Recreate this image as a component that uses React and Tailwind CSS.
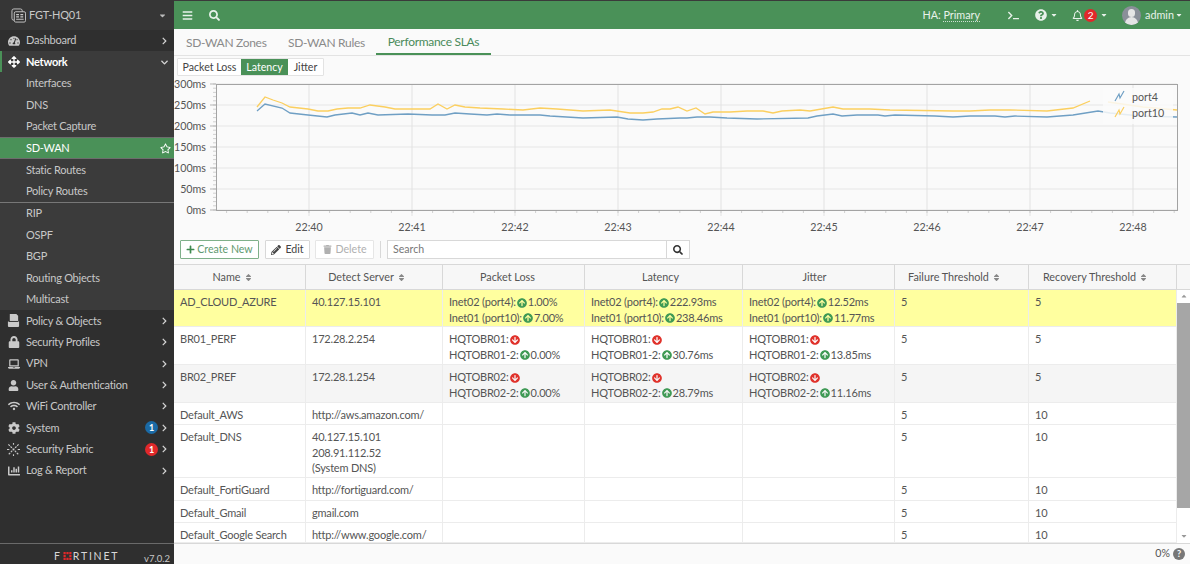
import React from "react";
import {
  FaTachometerAlt, FaArrowsAlt, FaRegStar, FaLock, FaLaptop, FaUser, FaWifi, FaCog, FaChartBar,
  FaBars, FaSearch, FaTerminal, FaQuestionCircle, FaRegBell, FaCaretDown, FaChevronRight, FaChevronDown,
  FaPlus, FaPencilAlt, FaTrash, FaSort, FaArrowCircleUp, FaArrowCircleDown, FaCaretUp,
} from "react-icons/fa";

const yellowA = [[257,107],[265,97],[273,100],[282,103],[290,107],[308,109],[318,111],[328,111],[337,109],[348,108],[360,108],[370,105],[385,107],[395,109],[408,109],[418,109],[430,109],[438,104],[447,109],[455,105],[465,107],[480,108],[503,109],[523,110],[540,108],[557,109],[583,111],[610,110],[630,113],[643,113],[653,112],[662,109],[670,109],[678,107],[687,111],[696,108],[705,114],[713,112],[730,112],[747,111],[763,111],[773,113],[782,111],[800,110],[810,111],[833,107],[843,109],[870,109],[890,110],[953,111],[970,111],[990,110],[1010,110],[1047,111],[1073,108],[1090,101]];
const yellowB = [[1108,102],[1143,107],[1177,110]];
const blue = [[257,111],[265,104],[282,108],[290,113],[308,115],[327,117],[335,115],[352,113],[360,115],[368,113],[378,115],[408,114],[432,115],[445,115],[455,113],[470,114],[487,115],[497,114],[510,115],[540,115],[550,116],[583,118],[617,117],[628,119],[643,120],[657,119],[680,118],[687,118],[697,117],[710,117],[727,118],[757,119],[808,118],[817,116],[833,114],[842,116],[857,115],[878,115],[885,116],[895,115],[935,116],[953,117],[970,116],[995,116],[1005,117],[1015,116],[1047,117],[1073,115],[1098,111],[1110,113],[1140,116],[1177,117]];
const pts = (a) => a.map((p) => p.join(",")).join(" ");

function Chart() {
  const ys = [[84,"300ms"],[105,"250ms"],[126,"200ms"],[147,"150ms"],[168,"100ms"],[189,"50ms"],[210,"0ms"]];
  const xs = [[309,"22:40"],[412,"22:41"],[515,"22:42"],[618,"22:43"],[721,"22:44"],[824,"22:45"],[927,"22:46"],[1030,"22:47"],[1133,"22:48"]];
  const minorX = [];
  for (let x = 226.6; x < 1177; x += 20.6) minorX.push(x);
  const minorY = [];
  for (let y = 84; y <= 210; y += 4.2) minorY.push(y);
  return (
    <svg viewBox="174 76 1016 162" className="block h-[162px] w-[1016px] shrink-0">
      {ys.map(([y]) => <line key={y} x1="216" x2="1177" y1={y} y2={y} stroke="#e6e6e6" />)}
      {xs.map(([x]) => <line key={x} x1={x} x2={x} y1="84" y2="216" stroke="#e2e2e2" />)}
      {minorX.map((x) => <line key={x} x1={x} x2={x} y1="210" y2="213" stroke="#d0d0d0" />)}
      {minorY.map((y) => <line key={y} x1="213" x2="216" y1={y} y2={y} stroke="#d0d0d0" />)}
      {ys.map(([y]) => <line key={y} x1="210" x2="216" y1={y} y2={y} stroke="#b5b5b5" />)}
      <rect x="216.5" y="84.5" width="961" height="126" fill="none" stroke="#a3a3a3" />
      <polyline points={pts(yellowA)} fill="none" stroke="#fbcf5f" strokeWidth="1.3" />
      <polyline points={pts(yellowB)} fill="none" stroke="#fbcf5f" strokeWidth="1.3" />
      <polyline points={pts(blue)} fill="none" stroke="#6f9fc4" strokeWidth="1.3" />
      <rect x="1103" y="88" width="70" height="36" fill="#fafafa" fillOpacity="0.85" />
      <polyline points="1115,101 1119,94 1120,98 1124,91" fill="none" stroke="#6f9fc4" strokeWidth="1.2" />
      <polyline points="1115,117 1119,110 1120,114 1124,107" fill="none" stroke="#fbcf5f" strokeWidth="1.2" />
      <text x="1132" y="101" fontSize="10.7" fill="#555">port4</text>
      <text x="1132" y="117" fontSize="10.7" fill="#555">port10</text>
      {ys.map(([y, t]) => <text key={t} x="206" y={y + 3.5} fontSize="10.7" textAnchor="end" fill="#555">{t}</text>)}
      {xs.map(([x, t]) => <text key={t} x={x} y="231" fontSize="10.7" textAnchor="middle" fill="#555">{t}</text>)}
    </svg>
  );
}

const PolicyIcon = () => (
  <svg viewBox="0 0 14 14" className="h-[13px] w-[13px]" fill="currentColor">
    <path d="M3 0h7l2 2v6H3z" /><path d="M1 8h12v5a1 1 0 0 1-1 1H2a1 1 0 0 1-1-1z" /><path d="M2 7.5h10v1H2z" fill="#2f2f2f" />
  </svg>
);
const FabricIcon = () => (
  <svg viewBox="0 0 14 14" className="h-[13px] w-[13px]" fill="none" stroke="currentColor" strokeWidth="1.2">
    <path d="M1.5 1.5l11 11M12.5 1.5l-11 11" strokeDasharray="2.2 1" /><path d="M0 7h2.5M11.5 7H14M7 0v2M7 12v2" />
  </svg>
);
const DeviceIcon = () => (
  <svg viewBox="0 0 16 16" className="h-[15px] w-[15px]" fill="none" stroke="#c9c9c9" strokeWidth="1">
    <rect x="1" y="1" width="11" height="12" rx="2" /><rect x="3.5" y="4" width="12" height="11" rx="1.5" fill="#333" />
    <path d="M5.5 7h3M10 7h3M5.5 9.5h3M10 9.5h3M5.5 12h8" strokeWidth="1.2" />
  </svg>
);

const sideText = "text-[11px] tracking-[-0.25px]";

function Row({ icon, label, bold, chevron, badge, cls = "" }) {
  return (
    <div className={"flex h-[21.43px] shrink-0 items-center " + sideText + " " + (bold ? "font-bold text-white " : "text-[#c8c8c8] ") + cls}>
      <span className="flex w-[26px] shrink-0 justify-center pl-[1px] text-[#c9c9c9]">{icon}</span>
      <span className="flex-1 truncate">{label}</span>
      {badge && <span className={"mr-[3px] flex h-[13px] w-[13px] items-center justify-center rounded-full text-[9px] font-bold text-white " + badge[0]}>{badge[1]}</span>}
      {chevron && <span className="mr-[6px] flex w-[7px] justify-center text-[#d5d5d5]">{chevron === "down" ? <FaChevronDown size={9} /> : <FaChevronRight size={8} />}</span>}
    </div>
  );
}

function Sidebar() {
  return (
    <aside className="flex h-[564px] w-[174px] shrink-0 flex-col bg-[#2f2f2f]">
      <div className={"flex h-[30px] shrink-0 items-center bg-[#363636] pl-[11px] pr-[7px] text-[#c8c8c8] " + sideText}>
        <DeviceIcon />
        <span className="ml-[3px] flex-1">FGT-HQ01</span>
        <FaCaretDown size={9} className="text-[#bbb]" />
      </div>
      <Row icon={<FaTachometerAlt size={12} />} label="Dashboard" chevron="right" />
      <div className="relative flex flex-col bg-[#3b3b3b]">
        <span className="absolute left-0 top-0 h-[21px] w-[2px] bg-[#4a9158]" />
        <Row icon={<FaArrowsAlt size={12} className="text-white" />} label="Network" bold chevron="down" />
        <Row label="Interfaces" />
        <Row label="DNS" />
        <Row label="Packet Capture" />
        <div className={"flex h-[22px] shrink-0 items-center border-y border-[#6d6d6d] bg-[#4a9158] pl-[26px] pr-[3px] text-white " + sideText}>
          <span className="flex-1">SD-WAN</span>
          <FaRegStar size={11} />
        </div>
        <Row label="Static Routes" />
        <Row label="Policy Routes" />
        <div className="h-px bg-[#777]" />
        <Row label="RIP" />
        <Row label="OSPF" />
        <Row label="BGP" />
        <Row label="Routing Objects" />
        <Row label="Multicast" />
      </div>
      <Row icon={<PolicyIcon />} label="Policy & Objects" chevron="right" />
      <Row icon={<FaLock size={12} />} label="Security Profiles" chevron="right" />
      <Row icon={<FaLaptop size={12} />} label="VPN" chevron="right" />
      <Row icon={<FaUser size={11} />} label="User & Authentication" chevron="right" />
      <Row icon={<FaWifi size={12} />} label="WiFi Controller" chevron="right" />
      <Row icon={<FaCog size={12} />} label="System" chevron="right" badge={["bg-[#1b6aa5]", "1"]} />
      <Row icon={<FabricIcon />} label="Security Fabric" chevron="right" badge={["bg-[#e0282a]", "1"]} />
      <Row icon={<FaChartBar size={12} />} label="Log & Report" chevron="right" />
      <div className="flex-1" />
      <div className="flex h-[21px] shrink-0 items-end border-t border-[#6a6a6a] pl-[54px] pr-[4px]">
        <span className="mb-[3px] flex flex-1 items-center text-[10.5px] font-normal leading-none tracking-[1.8px] text-[#d8d8d8]">
          F
          <svg viewBox="0 0 9 9" className="mx-[1px] h-[8px] w-[9px]" fill="#e0282a">
            <rect width="2.5" height="2.5" /><rect x="3.25" width="2.5" height="2.5" /><rect x="6.5" width="2.5" height="2.5" />
            <rect y="3.25" width="2.5" height="2.5" /><rect x="6.5" y="3.25" width="2.5" height="2.5" />
            <rect y="6.5" width="2.5" height="2.5" /><rect x="3.25" y="6.5" width="2.5" height="2.5" /><rect x="6.5" y="6.5" width="2.5" height="2.5" />
          </svg>
          RTINET
        </span>
        <span className="text-[9.5px] leading-[11px] text-[#c8c8c8]">v7.0.2</span>
      </div>
    </aside>
  );
}

function TopBar() {
  return (
    <div className="flex h-[29px] shrink-0 items-center border-t border-[#3a3a3a] bg-[#4a9158] text-[10.8px] text-[#e8f1ea]">
      <FaBars size={11} className="ml-[8px]" />
      <FaSearch size={11} className="ml-[16px]" />
      <div className="flex-1" />
      <span>HA: <span className="border-b border-dotted border-[#cfe0d3]">Primary</span></span>
      <FaTerminal size={11} className="ml-[28px]" />
      <FaQuestionCircle size={12} className="ml-[16px]" />
      <FaCaretDown size={8} className="ml-[3px]" />
      <FaRegBell size={11} className="ml-[14px]" />
      <span className="ml-[1px] flex h-[13px] w-[13px] items-center justify-center rounded-full bg-[#e0282a] text-[10px] text-white">2</span>
      <FaCaretDown size={8} className="ml-[3px]" />
      <span className="relative ml-[14px] h-[19px] w-[19px] overflow-hidden rounded-full bg-[#8a8f99]">
        <span className="absolute left-[6px] top-[3px] h-[8px] w-[7px] rounded-full bg-[#e5e5e5]" />
        <span className="absolute left-[3px] top-[11px] h-[10px] w-[13px] rounded-t-full bg-[#e5e5e5]" />
      </span>
      <span className="ml-[4px]">admin</span>
      <FaCaretDown size={8} className="ml-[1px] mr-[7px]" />
    </div>
  );
}

function Tabs() {
  return (
    <div className="flex h-[27px] shrink-0 items-stretch border-b border-[#e3e3e3] bg-[#fafafa] pl-[2px] text-[12px] tracking-[-0.3px] text-[#8a8a8a]">
      <span className="flex w-[102px] items-center pl-[10px] pt-[1px]">SD-WAN Zones</span>
      <span className="flex w-[98px] items-center pl-[10px] pt-[1px]">SD-WAN Rules</span>
      <span className="flex w-[115px] items-center justify-center border-b-[2px] border-[#4a9158] pt-[1px] text-[#4a8a5b]">Performance SLAs</span>
    </div>
  );
}

function Pills() {
  return (
    <div className="flex h-[20px] shrink-0 items-end bg-[#fafafa] pl-[3px] text-[10.6px] leading-none text-[#444]">
      <div className="flex h-[18px] items-stretch rounded-[1px] border border-[#e3e3e3] bg-white">
        <span className="flex w-[63px] items-center justify-center">Packet Loss</span>
        <span className="flex w-[47px] items-center justify-center bg-[#4a9158] text-white">Latency</span>
        <span className="flex w-[35px] items-center justify-center">Jitter</span>
      </div>
    </div>
  );
}

function Toolbar() {
  const b = "flex h-[19px] items-center justify-center rounded-[1px] border bg-white text-[10.6px]";
  return (
    <div className="flex h-[26px] shrink-0 items-start bg-[#fafafa] pl-[6px] pt-[2px]">
      <button className={b + " w-[79px] border-[#7fb08a] text-[#5f9a70]"}><FaPlus size={9} className="mr-[2px] text-[#3f8a50]" />Create New</button>
      <button className={b + " ml-[6px] w-[45px] border-[#d8d8d8] text-[#444]"}><FaPencilAlt size={10} className="mr-[4px]" />Edit</button>
      <button className={b + " ml-[5px] w-[59px] border-[#e6e6e6] text-[#b0b0b0]"}><FaTrash size={9} className="mr-[4px]" />Delete</button>
      <span className="ml-[6px] mt-[1px] h-[17px] w-px bg-[#d8d8d8]" />
      <div className="ml-[6px] flex h-[19px] w-[303px]">
        <span className="flex flex-1 items-center border border-[#d8d8d8] bg-white pl-[5px] text-[10.6px] text-[#777]">Search</span>
        <span className="flex w-[23px] items-center justify-center border border-l-0 border-[#d8d8d8] bg-white text-[#333]"><FaSearch size={10} /></span>
      </div>
    </div>
  );
}

const Up = () => <FaArrowCircleUp size={10} className="mx-[1px] inline align-[-1.5px] text-[#3f9a55]" />;
const Down = () => <FaArrowCircleDown size={10} className="mx-[1px] inline align-[-1.5px] text-[#e0322b]" />;
const Stat = ({ rows }) => rows.map(([a, b], i) => (
  <div key={i} className="whitespace-nowrap">{a}:{b ? <><Up />{b}</> : <Down />}</div>
));
const perf = (a, b, x, y) => <Stat rows={[[a, x], [b, y]]} />;

const rows = [
  { h: "h-[37px]", bg: "bg-[#ffff9f]", n: "AD_CLOUD_AZURE", d: "40.127.15.101", p: perf("Inet02 (port4)", "Inet01 (port10)", "1.00%", "7.00%"), l: perf("Inet02 (port4)", "Inet01 (port10)", "222.93ms", "238.46ms"), j: perf("Inet02 (port4)", "Inet01 (port10)", "12.52ms", "11.77ms"), f: 5, r: 5 },
  { h: "h-[38px]", bg: "bg-white", n: "BR01_PERF", d: "172.28.2.254", p: perf("HQTOBR01", "HQTOBR01-2", null, "0.00%"), l: perf("HQTOBR01", "HQTOBR01-2", null, "30.76ms"), j: perf("HQTOBR01", "HQTOBR01-2", null, "13.85ms"), f: 5, r: 5 },
  { h: "h-[38px]", bg: "bg-[#f5f5f5]", n: "BR02_PREF", d: "172.28.1.254", p: perf("HQTOBR02", "HQTOBR02-2", null, "0.00%"), l: perf("HQTOBR02", "HQTOBR02-2", null, "28.79ms"), j: perf("HQTOBR02", "HQTOBR02-2", null, "11.16ms"), f: 5, r: 5 },
  { h: "h-[22px]", bg: "bg-white", n: "Default_AWS", d: "http://aws.amazon.com/", f: 5, r: 10 },
  { h: "h-[53px]", bg: "bg-white", n: "Default_DNS", d: <><div>40.127.15.101</div><div>208.91.112.52</div><div>(System DNS)</div></>, f: 5, r: 10 },
  { h: "h-[23px]", bg: "bg-white", n: "Default_FortiGuard", d: "http://fortiguard.com/", f: 5, r: 10 },
  { h: "h-[22px]", bg: "bg-white", n: "Default_Gmail", d: "gmail.com", f: 5, r: 10 },
  { h: "h-[20px]", bg: "bg-white", n: "Default_Google Search", d: "http://www.google.com/", f: 5, r: 10 },
];

const cols = "grid grid-cols-[132px_137px_142px_158px_152px_134px_148px]";

function Head({ children, sort, pad = "pr-[14px]" }) {
  return (
    <div className={"flex items-center justify-center border-r border-[#d8d8d8] text-[10.8px] text-[#555] " + pad}>
      {children}{sort && <FaSort size={9} className="ml-[3px] text-[#888]" />}
    </div>
  );
}

function Table() {
  return (
    <div className="flex min-h-0 flex-1 flex-col">
      <div className="flex h-[26px] shrink-0 border-y border-[#d8d8d8] bg-[#f7f7f7]">
        <div className={cols + " w-[1003px]"}>
          <Head sort>Name</Head>
          <Head sort>Detect Server</Head>
          <Head pad="pr-[12px]">Packet Loss</Head>
          <Head pad="pr-[6px]">Latency</Head>
          <Head pad="pr-[8px]">Jitter</Head>
          <Head sort>Failure Threshold</Head>
          <Head sort>Recovery Threshold</Head>
        </div>
      </div>
      <div className="flex min-h-0 flex-1 overflow-hidden bg-white">
        <div className="w-[1003px] shrink-0">
          {rows.map((r) => (
            <div key={r.n} className={cols + " box-border border-b border-[#ececec] text-[11px] leading-[15.5px] tracking-[-0.2px] text-[#555] " + r.h + " " + r.bg}>
              {[r.n, r.d, r.p, r.l, r.j, r.f, r.r].map((c, i) => (
                <div key={i} className="overflow-hidden border-r border-[#ececec] pl-[6px] pt-[4px]">{c}</div>
              ))}
            </div>
          ))}
        </div>
        <div className="flex w-[13px] shrink-0 flex-col items-center bg-white">
          <div className="relative h-[13px] w-full"><FaCaretUp size={8} className="absolute left-[3px] top-[2px] text-[#999]" /></div>
          <div className="h-[205px] w-[13px] bg-[#a6a6a6]" />
          <div className="flex-1" />
          <FaCaretDown size={8} className="mb-[3px] text-[#999]" />
        </div>
      </div>
    </div>
  );
}

export default function App() {
  return (
    <div className="flex h-[564px] w-[1190px] overflow-hidden bg-[#fafafa] font-['Lato',sans-serif]">
      <Sidebar />
      <main className="flex min-w-0 flex-1 flex-col">
        <TopBar />
        <Tabs />
        <Pills />
        <Chart />
        <Toolbar />
        <Table />
        <div className="flex h-[21px] shrink-0 items-center justify-end border-t border-[#d8d8d8] bg-[#fafafa] pr-[5px] text-[10.6px] text-[#555]">
          0%
          <span className="ml-[3px] flex h-[12px] w-[12px] items-center justify-center rounded-full bg-[#777] text-[9px] font-bold text-white">?</span>
        </div>
      </main>
    </div>
  );
}
